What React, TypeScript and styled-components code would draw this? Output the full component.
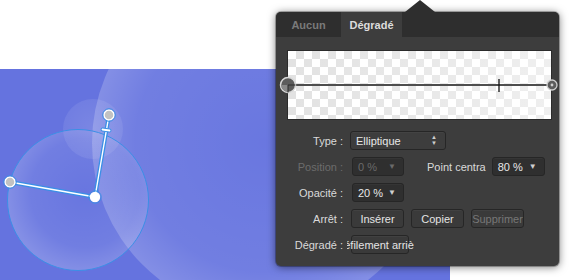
import React from "react";
import styled, { createGlobalStyle, css } from "styled-components";

const GlobalStyle = createGlobalStyle`
  html, body { margin: 0; padding: 0; background: #ffffff; }
  body { font-family: "Liberation Sans", Arial, Helvetica, sans-serif; font-size: 11px; }
  * { box-sizing: border-box; }
`;

const Page = styled.div`
  position: relative;
  width: 570px;
  height: 280px;
  overflow: hidden;
  padding-top: 69px;
`;

const Canvas = styled.div`
  width: 450px;
  height: 211px;
  background: #6573df;
  svg { display: block; }
`;

const Popover = styled.div`
  position: absolute;
  left: 276px;
  top: 12px;
  width: 283px;
  height: 254px;
  background: #3d3d3d;
  border-radius: 5px;
  box-shadow: 0 1px 9px rgba(0, 0, 0, 0.55), 0 0 0 1px rgba(0, 0, 0, 0.25);
  display: flex;
  flex-direction: column;

  &::before {
    content: "";
    position: absolute;
    left: 129px;
    top: -12px;
    width: 0;
    height: 0;
    border-left: 15px solid transparent;
    border-right: 15px solid transparent;
    border-bottom: 12px solid #2e2e2e;
  }
`;

const TabBar = styled.div`
  display: flex;
  height: 25px;
  background: #2e2e2e;
  border-radius: 5px 5px 0 0;
`;

const Tab = styled.div<{ $active?: boolean; $w: number }>`
  width: ${(p) => p.$w}px;
  display: flex;
  align-items: center;
  justify-content: center;
  font-weight: bold;
  font-size: 11px;
  color: #7a7a7a;
  ${(p) =>
    p.$active &&
    css`
      background: #3d3d3d;
      color: #dcdcdc;
    `}
`;

const GradientBox = styled.div`
  position: relative;
  margin: 13px 0 0 11px;
  width: 265px;
  height: 70px;
  border: 1px solid #2b2b2b;
  background:
    linear-gradient(to right, rgba(255, 255, 255, 0), rgba(255, 255, 255, 0.45)),
    repeating-conic-gradient(#e2e2e2 0 25%, #ffffff 0 50%) 0 0 / 16px 16px;
`;

const Overlay = styled.svg`
  position: absolute;
  left: -12px;
  top: -1px;
  overflow: visible;
`;

const Form = styled.div`
  display: grid;
  grid-template-columns: 57px auto;
  grid-auto-rows: 19px;
  column-gap: 7px;
  row-gap: 7px;
  margin: 11px 0 0 10px;
`;

const Label = styled.div<{ $disabled?: boolean }>`
  display: flex;
  align-items: center;
  justify-content: flex-end;
  white-space: nowrap;
  color: ${(p) => (p.$disabled ? "#6c6c6c" : "#dadada")};
`;

const Cell = styled.div`
  display: flex;
  align-items: center;
`;

const Select = styled.div<{ $w: number; $dark?: boolean; $disabled?: boolean; $ml?: number }>`
  position: relative;
  width: ${(p) => p.$w}px;
  height: 19px;
  margin-left: ${(p) => p.$ml ?? 0}px;
  display: flex;
  align-items: center;
  padding-left: 5px;
  border: 1px solid #262626;
  border-radius: 3px;
  background: ${(p) => (p.$dark ? "#2f2f2f" : "#3d3d3d")};
  color: ${(p) => (p.$disabled ? "#6a6a6a" : "#e8e8e8")};
  box-shadow: inset 0 1px 0 rgba(255, 255, 255, 0.03);
`;

const Caret = styled.span<{ $disabled?: boolean }>`
  position: absolute;
  right: 7px;
  top: 4px;
  font-size: 8px;
  color: ${(p) => (p.$disabled ? "#6a6a6a" : "#cfcfcf")};
`;

const Stepper = styled.span`
  position: absolute;
  right: 8px;
  top: 2px;
  display: flex;
  flex-direction: column;
  font-size: 6px;
  line-height: 6px;
  color: #cfcfcf;
`;

const InlineLabel = styled.span`
  margin-left: 23px;
  color: #dadada;
  white-space: nowrap;
`;

const Buttons = styled.div`
  display: flex;
  align-items: center;
  gap: 7px;
  margin-left: 1px;
`;

const Button = styled.div<{ $w: number; $disabled?: boolean; $spill?: boolean }>`
  width: ${(p) => p.$w}px;
  height: 19px;
  display: flex;
  align-items: center;
  justify-content: center;
  overflow: ${(p) => (p.$spill ? "visible" : "hidden")};
  white-space: nowrap;
  border: 1px solid #262626;
  border-radius: 3px;
  background: #3a3a3a;
  color: ${(p) => (p.$disabled ? "#777777" : "#e4e4e4")};
  box-shadow: inset 0 1px 0 rgba(255, 255, 255, 0.04);
`;

const ClippedText = styled.span`
  flex: 0 0 auto;
  width: 67px;
  display: flex;
  justify-content: center;
  overflow: hidden;
  white-space: nowrap;
`;

function CanvasArt() {
  return (
    <svg width={450} height={211} viewBox="0 0 450 211">
      <defs>
        <radialGradient id="big" cx="0.5" cy="0.5" r="0.5">
          <stop offset="0" stopColor="#fff" stopOpacity="0.03" />
          <stop offset="0.75" stopColor="#fff" stopOpacity="0.08" />
          <stop offset="1" stopColor="#fff" stopOpacity="0.2" />
        </radialGradient>
        <radialGradient id="sel" cx="0.55" cy="0.45" r="0.55">
          <stop offset="0" stopColor="#fff" stopOpacity="0.02" />
          <stop offset="0.7" stopColor="#fff" stopOpacity="0.08" />
          <stop offset="1" stopColor="#fff" stopOpacity="0.2" />
        </radialGradient>
        <radialGradient id="small" cx="0.5" cy="0.5" r="0.5">
          <stop offset="0" stopColor="#fff" stopOpacity="0.14" />
          <stop offset="1" stopColor="#fff" stopOpacity="0.08" />
        </radialGradient>
      </defs>
      <circle cx={264} cy={74} r={172} fill="url(#big)" />
      <circle cx={93} cy={60} r={30} fill="url(#small)" />
      <circle cx={78} cy={131} r={70.5} fill="url(#sel)" stroke="#3b8fe6" strokeWidth={1} />
      <g strokeLinecap="round">
        <line x1={95} y1={128} x2={10} y2={113} stroke="#3b8fe6" strokeWidth={4} />
        <line x1={95} y1={128} x2={10} y2={113} stroke="#ffffff" strokeWidth={1.4} />
        <line x1={95} y1={128} x2={109} y2={46} stroke="#3b8fe6" strokeWidth={4} />
        <line x1={95} y1={128} x2={109} y2={46} stroke="#ffffff" strokeWidth={1.4} />
      </g>
      <rect x={101} y={59.5} width={10} height={3} rx={1.5} fill="#ffffff" stroke="#3b8fe6" strokeWidth={1} transform="rotate(9 106 61)" />
      <circle cx={10} cy={113} r={5} fill="#c2c2c2" stroke="#ffffff" strokeWidth={1.5} />
      <circle cx={10} cy={113} r={6.3} fill="none" stroke="#3b8fe6" strokeWidth={1} />
      <circle cx={109} cy={46} r={5} fill="#c2c2c2" stroke="#ffffff" strokeWidth={1.5} />
      <circle cx={109} cy={46} r={6.3} fill="none" stroke="#3b8fe6" strokeWidth={1} />
      <circle cx={95} cy={128} r={5.2} fill="#ffffff" />
      <circle cx={95} cy={128} r={6.2} fill="none" stroke="#3b8fe6" strokeWidth={1} />
    </svg>
  );
}

function GradientOverlay() {
  const ox = 12;
  const cy = 35;
  return (
    <Overlay width={289} height={70}>
      <line x1={ox} y1={cy} x2={ox + 264} y2={cy} stroke="#4e4e4e" strokeWidth={2} />
      <line x1={ox + 211} y1={cy - 6} x2={ox + 211} y2={cy + 7} stroke="#111" strokeWidth={1.3} />
      <circle cx={ox} cy={cy} r={7.5} fill="#5c5c5c" stroke="#d8d8d8" strokeWidth={1.5} />
      <path d={`M${ox} ${cy} L${ox} ${cy + 6.8} A6.8 6.8 0 0 1 ${ox - 6.8} ${cy} Z`} fill="#888888" />
      <line x1={ox} y1={cy} x2={ox + 7.5} y2={cy} stroke="#2a2a2a" strokeWidth={1} />
      <line x1={ox} y1={cy} x2={ox} y2={cy + 7.5} stroke="#2a2a2a" strokeWidth={1} />
      <circle cx={ox + 264} cy={cy} r={5} fill="#5c5c5c" stroke="#cfcfcf" strokeWidth={1.3} />
      <circle cx={ox + 264} cy={cy} r={1.4} fill="#cfcfcf" />
    </Overlay>
  );
}

export default function App() {
  return (
    <>
      <GlobalStyle />
      <Page>
        <Canvas>
          <CanvasArt />
        </Canvas>
        <Popover>
          <TabBar>
            <Tab $w={65}>Aucun</Tab>
            <Tab $w={61} $active>
              Dégradé
            </Tab>
          </TabBar>
          <GradientBox>
            <GradientOverlay />
          </GradientBox>
          <Form>
            <Label>Type :</Label>
            <Cell>
              <Select $w={96}>
                Elliptique
                <Stepper>
                  <span>▲</span>
                  <span>▼</span>
                </Stepper>
              </Select>
            </Cell>

            <Label $disabled>Position :</Label>
            <Cell>
              <Select $w={52} $dark $disabled $ml={2}>
                0 %
                <Caret $disabled>▼</Caret>
              </Select>
              <InlineLabel>Point centra</InlineLabel>
              <Select $w={53} $dark $ml={6}>
                80 %
                <Caret>▼</Caret>
              </Select>
            </Cell>

            <Label>Opacité :</Label>
            <Cell>
              <Select $w={52} $dark $ml={2}>
                20 %
                <Caret>▼</Caret>
              </Select>
            </Cell>

            <Label>Arrêt :</Label>
            <Cell>
              <Buttons>
                <Button $w={53}>Insérer</Button>
                <Button $w={53}>Copier</Button>
                <Button $w={53} $disabled>
                  Supprimer
                </Button>
              </Buttons>
            </Cell>

            <Label>Dégradé :</Label>
            <Cell>
              <Buttons>
                <Button $w={58} $spill>
                  <ClippedText>Défilement arrière</ClippedText>
                </Button>
              </Buttons>
            </Cell>
          </Form>
        </Popover>
      </Page>
    </>
  );
}
